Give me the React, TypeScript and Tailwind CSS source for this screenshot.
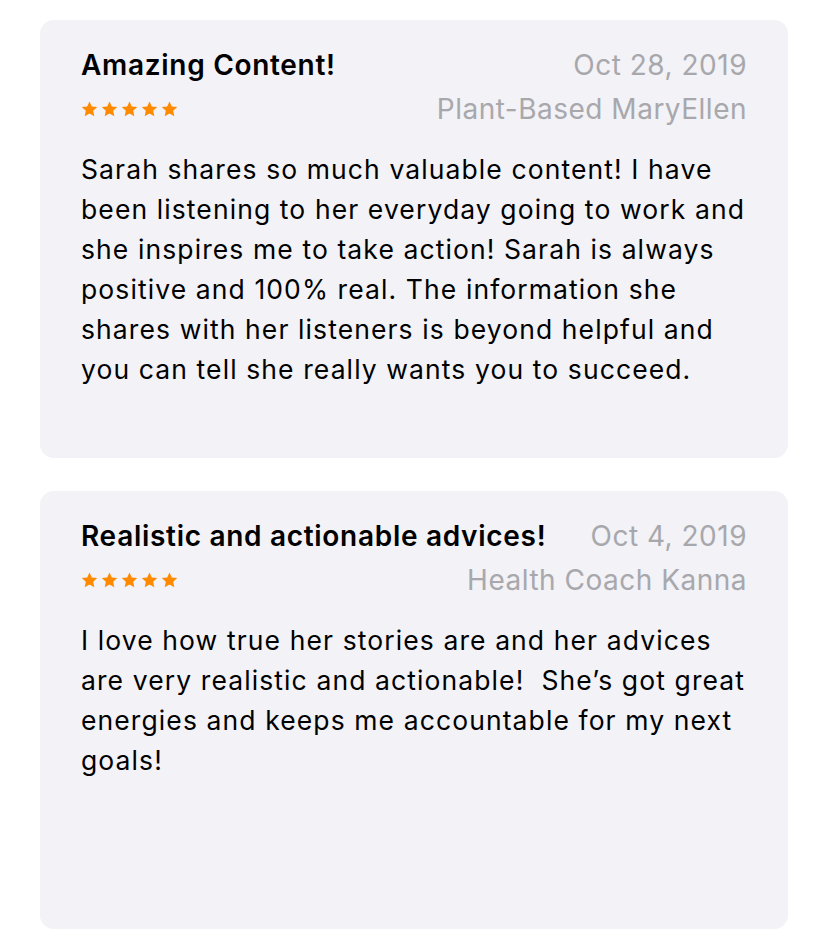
const reviews = [
  {
    title: "Amazing Content!",
    date: "Oct 28, 2019",
    author: "Plant-Based MaryEllen",
    body: "Sarah shares so much valuable content! I have been listening to her everyday going to work and she inspires me to take action! Sarah is always positive and 100% real. The information she shares with her listeners is beyond helpful and you can tell she really wants you to succeed.",
  },
  {
    title: "Realistic and actionable advices!",
    date: "Oct 4, 2019",
    author: "Health Coach Kanna",
    body: "I love how true her stories are and her advices are very realistic and actionable!  She\u2019s got great energies and keeps me accountable for my next goals!",
  },
];

const Star = () => (
  <svg width="17" height="16" viewBox="0 0 24 23" className="shrink-0">
    <path
      d="M12 0.8l3.3 7.1 7.8 0.9-5.8 5.3 1.6 7.7L12 17.9l-6.9 3.9 1.6-7.7L0.9 8.8l7.8-0.9z"
      fill="#ff8a00"
    />
  </svg>
);

const ReviewCard = ({ review }) => (
  <div className="w-[748px] h-[438px] rounded-[14px] bg-[#f2f2f7] px-[41px] pt-[23px]">
    <div className="flex justify-between items-center whitespace-nowrap leading-[44px] text-[28px]">
      <div className="font-semibold text-black tracking-[0.7px]">
        {review.title}
      </div>
      <div className="text-[#a8a8ac] tracking-[0.5px]">{review.date}</div>
    </div>
    <div className="flex justify-between items-center whitespace-nowrap h-[44px]">
      <div className="flex items-center gap-[3px]">
        <Star />
        <Star />
        <Star />
        <Star />
        <Star />
      </div>
      <div className="text-[28px] leading-[44px] text-[#a8a8ac] tracking-[0.5px]">
        {review.author}
      </div>
    </div>
    <p className="mt-[18px] text-[26.5px] leading-[40px] text-black tracking-[1.1px] whitespace-pre-wrap">
      {review.body}
    </p>
  </div>
);

export default function App() {
  return (
    <div
      className="w-[823px] h-[948px] bg-white pt-[20px] pl-[40px] flex flex-col gap-[33px]"
      style={{ fontFamily: "Inter, 'Noto Sans', sans-serif" }}
    >
      {reviews.map((r) => (
        <ReviewCard key={r.title} review={r} />
      ))}
    </div>
  );
}
